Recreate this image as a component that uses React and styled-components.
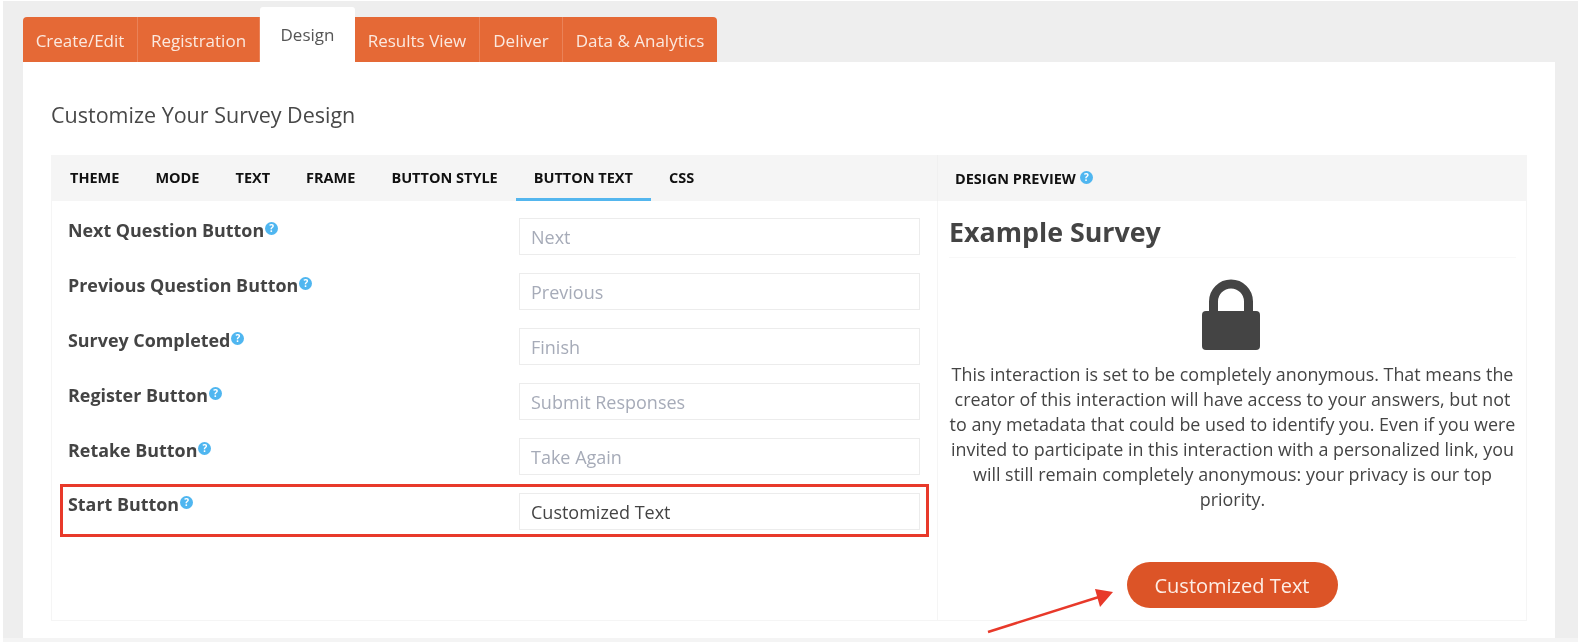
import React from 'react';
import styled, { createGlobalStyle } from 'styled-components';

const GlobalStyle = createGlobalStyle`
  html, body {
    margin: 0;
    padding: 0;
    background: #fff;
    font-family: "Open Sans", "Liberation Sans", sans-serif;
    color: #444;
  }
  * { box-sizing: border-box; }
`;

const Shell = styled.div`
  width: 1578px;
  height: 642px;
  overflow: hidden;
  padding: 1px 0 0 3px;
  background: #fff;
  filter: blur(0.35px);
`;

const Backdrop = styled.div`
  height: 637px;
  padding: 6px 23px 0 20px;
  background: #eeeeee;
  display: flex;
  flex-direction: column;
`;

const BottomStrip = styled.div`
  height: 4px;
  background: #f4f4f4;
`;

const TabBar = styled.div`
  display: flex;
  align-items: flex-end;
  height: 55px;
`;

const Tab = styled.div`
  width: ${(p) => p.$width}px;
  height: ${(p) => (p.$active ? 55 : 45)}px;
  padding-top: ${(p) => (p.$active ? 0 : 2)}px;
  padding-bottom: ${(p) => (p.$active ? 1 : 0)}px;
  display: flex;
  align-items: center;
  justify-content: center;
  font-size: 17px;
  color: ${(p) => (p.$active ? '#555' : '#fbe9df')};
  background: ${(p) => (p.$active ? '#fff' : '#e56936')};
  border-right: ${(p) => (p.$active || p.$last ? 'none' : '1px solid #ea8258')};
  border-radius: ${(p) => (p.$first ? '4px 0 0 0' : p.$last ? '0 4px 0 0' : p.$active ? '3px 3px 0 0' : '0')};
`;

const Card = styled.div`
  flex: 1;
  background: #fff;
  padding: 36px 28px 17px;
  display: flex;
  flex-direction: column;
`;

const Heading = styled.h2`
  margin: 0;
  height: 57px;
  font-size: 21.5px;
  font-weight: 400;
  line-height: 34px;
  color: #484848;
`;

const Panel = styled.div`
  position: relative;
  flex: 1;
  display: grid;
  grid-template-columns: 885px 1fr;
  grid-template-rows: 46px 1fr;
  border: 1px solid #f5f5f5;
  border-top: none;
`;

const NavBar = styled.div`
  background: #f5f5f5;
  display: flex;
  height: 46px;
`;

const NavItem = styled.div`
  height: 46px;
  padding: 2px 18px 0;
  display: flex;
  align-items: center;
  font-size: 14.5px;
  font-weight: 700;
  color: #111;
  border-bottom: 3px solid ${(p) => (p.$active ? '#54b6ee' : 'transparent')};
`;

const PreviewBar = styled.div`
  background: #f5f5f5;
  border-left: 1px solid #f0f0f0;
  padding: 0 0 0 17px;
  display: flex;
  align-items: center;
  gap: 4px;
  font-size: 14.5px;
  font-weight: 700;
  color: #111;
`;

const Form = styled.div`
  padding: 17px 11px 0 16px;
  display: flex;
  flex-direction: column;
  gap: 18px;
`;

const Row = styled.div`
  position: relative;
  display: grid;
  grid-template-columns: 451px 401px;
  height: 37px;

  ${(p) => p.$highlight && `
    &::after {
      content: '';
      position: absolute;
      left: -8px;
      right: -3px;
      top: -9px;
      bottom: -7px;
      border: 3px solid #e8392a;
      pointer-events: none;
    }
  `}
`;

const Label = styled.div`
  margin-top: ${(p) => (p.$raised ? -1 : 0)}px;
  font-size: 17.9px;
  font-weight: 700;
  color: #444;
  line-height: 24px;
  display: flex;
  align-items: flex-start;
  gap: 1px;
`;

const Field = styled.div`
  height: 37px;
  padding: 0 11px;
  display: flex;
  align-items: center;
  font-size: 18px;
  border: 1px solid #ececec;
  color: ${(p) => (p.$filled ? '#444' : '#a6abb8')};
`;

const Help = styled.span`
  flex: none;
  width: 13px;
  height: 13px;
  margin-top: ${(p) => p.$top || 0}px;
  border-radius: 50%;
  background: #4fb6f0;
  color: #fff;
  font-size: 10px;
  font-weight: 700;
  line-height: 13px;
  text-align: center;
`;

const Preview = styled.div`
  border-left: 1px solid #f5f5f5;
  padding: 0 10px 0 11px;
  display: flex;
  flex-direction: column;
  align-items: center;
`;

const PreviewTitle = styled.h3`
  align-self: stretch;
  margin: 0;
  height: 57px;
  padding-top: 12px;
  font-size: 26.8px;
  font-weight: 700;
  line-height: 38px;
  color: #444;
  border-bottom: 1px solid #f8f8f8;
`;

const LockIcon = styled.svg`
  display: block;
  width: 58px;
  height: 71px;
  margin: 21px 3px 0 0;
`;

const Notice = styled.p`
  margin: 12px 0 0;
  width: 100%;
  text-align: center;
  font-size: 17.9px;
  line-height: 25px;
  color: #444;
`;

const StartButton = styled.div`
  margin: 50px 1px 0 0;
  width: 211px;
  height: 46px;
  border-radius: 23px;
  background: #dc5427;
  color: #fdeee6;
  font-size: 20px;
  display: flex;
  align-items: center;
  justify-content: center;
`;

const Arrow = styled.svg`
  position: absolute;
  left: 930px;
  top: 430px;
  width: 140px;
  height: 50px;
  overflow: visible;
`;

const tabs = [
  { name: 'Create/Edit', width: 115, first: true },
  { name: 'Registration', width: 122 },
  { name: 'Design', width: 95, active: true },
  { name: 'Results View', width: 125 },
  { name: 'Deliver', width: 83 },
  { name: 'Data & Analytics', width: 154, last: true },
];

const navItems = ['THEME', 'MODE', 'TEXT', 'FRAME', 'BUTTON STYLE', 'BUTTON TEXT', 'CSS'];

const rows = [
  { label: 'Next Question Button', value: 'Next' },
  { label: 'Previous Question Button', value: 'Previous' },
  { label: 'Survey Completed', value: 'Finish' },
  { label: 'Register Button', value: 'Submit Responses' },
  { label: 'Retake Button', value: 'Take Again' },
  { label: 'Start Button', value: 'Customized Text', filled: true },
];

const App = () => (
  <Shell>
    <GlobalStyle />
    <Backdrop>
      <TabBar>
        {tabs.map((t) => (
          <Tab key={t.name} $width={t.width} $active={t.active} $first={t.first} $last={t.last}>
            {t.name}
          </Tab>
        ))}
      </TabBar>
      <Card>
        <Heading>Customize Your Survey Design</Heading>
        <Panel>
          <NavBar>
            {navItems.map((n) => (
              <NavItem key={n} $active={n === 'BUTTON TEXT'}>{n}</NavItem>
            ))}
          </NavBar>
          <PreviewBar>
            DESIGN PREVIEW <Help $top={-1}>?</Help>
          </PreviewBar>
          <Form>
            {rows.map((r) => (
              <Row key={r.label} $highlight={r.filled}>
                <Label $raised={r.filled}>
                  {r.label}
                  <Help $top={4}>?</Help>
                </Label>
                <Field $filled={r.filled}>{r.value}</Field>
              </Row>
            ))}
          </Form>
          <Preview>
            <PreviewTitle>Example Survey</PreviewTitle>
            <LockIcon viewBox="0 0 58 71">
              <path d="M11.5 36V22.5a17.5 17.5 0 0 1 35 0V36" fill="none" stroke="#444" strokeWidth="9" />
              <rect x="0" y="32" width="58" height="39" rx="4" fill="#444" />
            </LockIcon>
            <Notice>
              This interaction is set to be completely anonymous. That means the creator of this
              interaction will have access to your answers, but not to any metadata that could be
              used to identify you. Even if you were invited to participate in this interaction with
              a personalized link, you will still remain completely anonymous: your privacy is our
              top priority.
            </Notice>
            <StartButton>Customized Text</StartButton>
          </Preview>
          <Arrow viewBox="0 0 140 50">
            <line x1="6" y1="47" x2="120" y2="11" stroke="#e8392a" strokeWidth="2.5" />
            <polygon points="131,7 113,4 118,22" fill="#e8392a" />
          </Arrow>
        </Panel>
      </Card>
    </Backdrop>
    <BottomStrip />
  </Shell>
);

export default App;
